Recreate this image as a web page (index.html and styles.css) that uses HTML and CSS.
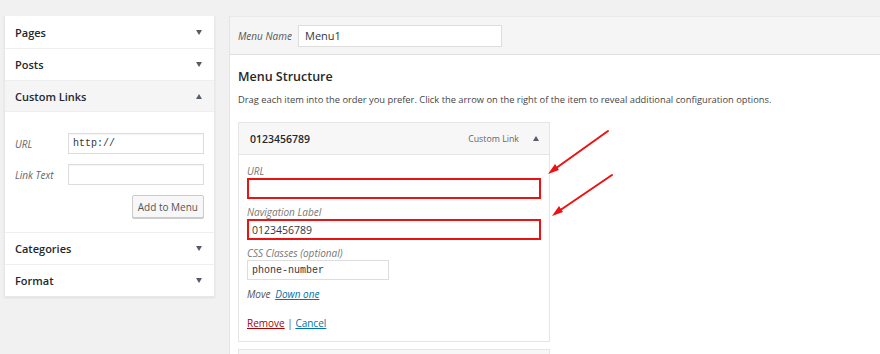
FILE: index.html
```html
<!DOCTYPE html>
<html>
<head>
<meta charset="utf-8">
<link rel="stylesheet" href="styles.css">
</head>
<body>
<div class="page">
  <aside class="sidebar">
    <div class="acc"><span>Pages</span><span class="tri down"></span></div>
    <div class="acc"><span>Posts</span><span class="tri down"></span></div>
    <div class="acc open"><span>Custom Links</span><span class="tri up"></span></div>
    <div class="acc-body">
      <div class="frow"><label class="flabel">URL</label><input class="finput mono" value="http://"></div>
      <div class="frow"><label class="flabel">Link Text</label><input class="finput"></div>
      <div class="btnrow"><button class="btn">Add to Menu</button></div>
    </div>
    <div class="acc"><span>Categories</span><span class="tri down"></span></div>
    <div class="acc last"><span>Format</span><span class="tri down"></span></div>
  </aside>
  <main class="main">
    <div class="mhead">
      <label class="mname">Menu Name</label>
      <input class="minput" value="Menu1">
    </div>
    <div class="mbody">
      <h3 class="mtitle">Menu Structure</h3>
      <p class="mdesc">Drag each item into the order you prefer. Click the arrow on the right of the item to reveal additional configuration options.</p>
      <div class="item">
        <div class="ihead">
          <span class="ititle">0123456789</span>
          <span class="itype">Custom Link</span>
          <span class="tri up"></span>
        </div>
        <div class="ibody">
          <label class="ilabel">URL</label>
          <input class="iinput hl">
          <label class="ilabel">Navigation Label</label>
          <input class="iinput hl" value="0123456789">
          <label class="ilabel">CSS Classes (optional)</label>
          <input class="iinput small mono" value="phone-number">
          <div class="move"><em>Move</em> <a class="lnk">Down one</a></div>
          <div class="actions"><a class="lnk red">Remove</a> | <a class="lnk">Cancel</a></div>
        </div>
      </div>
      <div class="item next"></div>
    </div>
  </main>
</div>
<svg class="arrows" width="880" height="354" viewBox="0 0 880 354">
  <g stroke="#ee1111" stroke-width="2" fill="none" stroke-linecap="round">
    <line x1="608" y1="131" x2="552" y2="171"/>
    <line x1="612" y1="175" x2="556" y2="213"/>
  </g>
  <g fill="#ee1111">
    <polygon points="548,174 555,164 559,170"/>
    <polygon points="552,216 559,206 563,212"/>
  </g>
</svg>
</body>
</html>
```
FILE: styles.css
```css
* { box-sizing: border-box; }
html, body { margin: 0; padding: 0; }
body {
  background: #f1f1f1;
  font-family: "Open Sans", "Noto Sans", sans-serif;
  color: #23282d;
  width: 880px;
  height: 354px;
  overflow: hidden;
  position: relative;
}
.page {
  display: flex;
  align-items: flex-start;
  padding: 16px 0 0 4px;
  gap: 14px;
}
.sidebar {
  width: 211px;
  flex: none;
  background: #fff;
  box-shadow: 0 1px 2px rgba(0,0,0,0.08);
  border: 1px solid #e8e8e8;
  border-top: none;
}
.acc {
  height: 32px;
  display: flex;
  align-items: center;
  justify-content: space-between;
  padding: 0 12px 0 10px;
  font-size: 11px;
  font-weight: 600;
  color: #23282d;
  border-top: 1px solid #eee;
  background: #fff;
}
.acc:first-child { border-top: none; }
.acc.open { background: #f5f5f5; border-bottom: 1px solid #eee; }
.tri {
  width: 0; height: 0;
  border-left: 3.5px solid transparent;
  border-right: 3.5px solid transparent;
}
.tri.down { border-top: 5px solid #555d66; }
.tri.up { border-bottom: 5px solid #555d66; }
.acc-body {
  padding: 21px 10px 12px 10px;
  height: 120px;
}
.frow {
  display: flex;
  align-items: center;
  margin-bottom: 10px;
}
.flabel {
  width: 54px;
  font-style: italic;
  font-size: 10px;
  color: #666;
}
.finput {
  width: 136px;
  height: 21px;
  border: 1px solid #ddd;
  background: #fff;
  font-size: 10px;
  padding: 0 4px;
  font-family: inherit;
  color: #32373c;
  box-shadow: inset 0 1px 1px rgba(0,0,0,0.04);
}
.btnrow { display: flex; justify-content: flex-end; }
.btn {
  height: 23px;
  padding: 0 5px;
  font-family: inherit;
  font-size: 10px;
  color: #555;
  background: #f7f7f7;
  border: 1px solid #ccc;
  border-radius: 2px;
  box-shadow: 0 1px 0 #ccc;
  white-space: nowrap;
}
.main {
  flex: 1;
  background: #fff;
  border-left: 1px solid #e5e5e5;
  border-top: 1px solid #e9e9e9;
  height: 338px;
  overflow: hidden;
}
.mhead {
  height: 38px;
  background: #f5f5f5;
  border-bottom: 1px solid #dfdfdf;
  display: flex;
  align-items: center;
  padding: 0 8px;
}
.mname {
  font-style: italic;
  font-size: 10px;
  color: #555;
  width: 60px;
}
.minput {
  width: 204px;
  height: 22px;
  border: 1px solid #ddd;
  background: #fff;
  font-family: inherit;
  font-size: 11px;
  padding: 0 6px;
  color: #32373c;
}
.mbody { padding: 0 8px; }
.mtitle {
  margin: 13px 0 0 0;
  font-size: 12.5px;
  font-weight: 600;
  line-height: 18px;
  color: #23282d;
}
.mdesc {
  margin: 7px 0 0 0;
  font-size: 9.33px;
  line-height: 14px;
  color: #444;
}
.item {
  width: 312px;
  margin-top: 15px;
}
.ihead {
  height: 33px;
  background: #f7f7f7;
  border: 1px solid #e5e5e5;
  display: flex;
  align-items: center;
  padding: 0 10px 0 11px;
}
.ititle { font-size: 10.5px; font-weight: 600; flex: 1; color: #23282d; }
.itype { font-size: 8.8px; color: #666; margin-right: 14px; }
.ibody {
  border: 1px solid #e5e5e5;
  border-top: none;
  padding: 10px 8px 0 8px;
  height: 187px;
  display: flex;
  flex-direction: column;
  align-items: flex-start;
}
.ilabel {
  font-style: italic;
  font-size: 10px;
  color: #777;
  line-height: 12px;
  margin-bottom: 1px;
}
.iinput {
  width: 294px;
  height: 21px;
  border: 1px solid #ddd;
  background: #fff;
  font-family: inherit;
  font-size: 10.5px;
  padding: 0 4px;
  color: #32373c;
  margin-bottom: 7px;
  flex: none;
}
.mono, .finput.mono, .iinput.mono { font-family: "Liberation Mono", "DejaVu Sans Mono", monospace; font-size: 10px; }
.iinput.hl { border: 2px solid #ee1111; padding: 0 3px; }
.iinput.small { width: 142px; height: 20px; margin-bottom: 0; }
.move { font-size: 10px; color: #555; margin-top: 7px; line-height: 14px; }
.move em { margin-right: 2px; }
.lnk { color: #0073aa; text-decoration: underline; font-style: italic; }
.actions { font-size: 10px; color: #555; margin-top: 15px; line-height: 14px; }
.actions .lnk { font-style: normal; }
.lnk.red { color: #a00; }
.item.next {
  margin-top: 7px;
  height: 20px;
  border: 1px solid #e5e5e5;
  background: #f7f7f7;
}
.arrows {
  position: absolute;
  left: 0; top: 0;
  pointer-events: none;
}
```
